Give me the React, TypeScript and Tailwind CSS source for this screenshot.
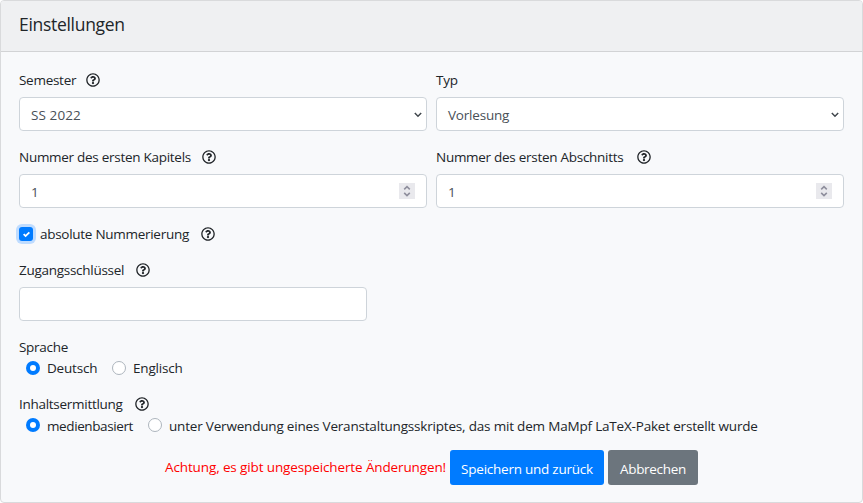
import type { ReactNode } from 'react';
import { FaRegQuestionCircle } from 'react-icons/fa';

function Help({ className = '' }: { className?: string }) {
  return <FaRegQuestionCircle className={`size-[14px] shrink-0 text-[#212529] ${className}`} />;
}

function Label({ children, width, help = false }: { children: ReactNode; width: string; help?: boolean }) {
  return (
    <div className="flex h-5 items-center tracking-[-0.28px]">
      <span className={`shrink-0 ${width}`}>{children}</span>
      {help && <Help />}
    </div>
  );
}

function Field({ children }: { children: ReactNode }) {
  return (
    <div className="mt-[7px] flex h-[34px] items-center justify-between rounded-[4px] border border-[#ced4da] bg-white pl-[11px] text-[#495057]">
      {children}
    </div>
  );
}

function Chevron() {
  return (
    <svg viewBox="0 0 8 6" className="mr-1 mt-px h-[6px] w-2 fill-none stroke-[#41474d] stroke-[1.5]">
      <path d="M0.8 1 4 4.2 7.2 1" />
    </svg>
  );
}

function Spinner() {
  return (
    <span className="mr-[11px] flex h-4 w-4 items-center justify-center bg-[#e9e9ed]">
      <svg viewBox="0 0 16 16" className="size-4 fill-none stroke-[#8f8f9d] stroke-[1.6]">
        <path d="M5.2 6.3 8 3.6l2.8 2.7M5.2 9.9 8 12.6l2.8-2.7" />
      </svg>
    </span>
  );
}

function Radio({ checked = false }: { checked?: boolean }) {
  return checked ? (
    <span className="flex size-[14px] shrink-0 items-center justify-center rounded-full bg-[#007bff]">
      <span className="size-[6px] rounded-full bg-white" />
    </span>
  ) : (
    <span className="size-[14px] shrink-0 rounded-full border border-[#adb5bd] bg-white" />
  );
}

export default function App() {
  return (
    <div className="h-[503px] w-[863px] overflow-hidden whitespace-nowrap rounded-[4px] border border-[#d9dadc] bg-[#f8f9fb] font-['Open_Sans',sans-serif] text-[13.5px] leading-5 tracking-[-0.2px] text-[#212529]">
      <header className="flex h-[51px] items-center border-b border-[#d2d3d5] bg-[#eff0f2] pb-[5px] pl-[18px] text-[17.5px] tracking-[-0.3px]">
        <span>Einstellungen</span>
      </header>
      <main className="px-[18px] pt-[18px]">
        <div className="grid grid-cols-2 gap-x-[9px] gap-y-4">
          <div>
            <Label width="w-[67px]" help>Semester</Label>
            <Field><span className="pt-[2px] tracking-[0.1px]">SS 2022</span><Chevron /></Field>
          </div>
          <div>
            <Label width="w-[67px]">Typ</Label>
            <Field><span className="pt-[2px]">Vorlesung</span><Chevron /></Field>
          </div>
          <div>
            <Label width="w-[183px]" help>Nummer des ersten Kapitels</Label>
            <Field><span className="pt-[2px]">1</span><Spinner /></Field>
          </div>
          <div>
            <Label width="w-[201px]" help>Nummer des ersten Abschnitts</Label>
            <Field><span className="pt-[2px]">1</span><Spinner /></Field>
          </div>
        </div>
        <div className="mt-4 flex h-5 items-center">
          <span className="flex size-[14px] shrink-0 items-center justify-center rounded-[3px] bg-[#007bff] ring-[3px] ring-[#bfdcff]">
            <svg viewBox="0 0 8 8" className="size-[7px] fill-white">
              <path d="M6.564.75l-3.59 3.612-1.538-1.55L0 4.26 2.974 7.25 8 2.193z" />
            </svg>
          </span>
          <span className="ml-[7px] w-[161px] shrink-0 tracking-[-0.28px]">absolute Nummerierung</span>
          <Help />
        </div>
        <div className="mt-4 w-[348px]">
          <Label width="w-[117px]" help>Zugangsschlüssel</Label>
          <Field>{null}</Field>
        </div>
        <div className="mt-4">
          <Label width="w-[67px]">Sprache</Label>
          <div className="mt-px flex h-5 items-center pl-[7px]">
            <Radio checked />
            <span className="ml-[7px] w-[65px] shrink-0">Deutsch</span>
            <Radio />
            <span className="ml-[7px]">Englisch</span>
          </div>
        </div>
        <div className="mt-4">
          <Label width="w-[116px]" help>Inhaltsermittlung</Label>
          <div className="mt-px flex h-5 items-center pl-[7px]">
            <Radio checked />
            <span className="ml-[7px] w-[101px] shrink-0 pt-[2px] tracking-[-0.4px]">medienbasiert</span>
            <Radio />
            <span className="ml-[7px] pt-[2px] tracking-[-0.19px]">unter Verwendung eines Veranstaltungsskriptes, das mit dem MaMpf LaTeX-Paket erstellt wurde</span>
          </div>
        </div>
        <div className="mt-[15px] flex h-[35px] items-center pl-[146px]">
          <span className="w-[285px] shrink-0 pb-[2px] tracking-[-0.12px] text-[#ff0000]">Achtung, es gibt ungespeicherte Änderungen!</span>
          <button className="h-[35px] w-[154px] rounded-[3px] bg-[#007bff] pt-[2px] tracking-[-0.24px] text-white">Speichern und zurück</button>
          <button className="ml-1 h-[35px] w-[90px] rounded-[3px] bg-[#6c757d] pt-[2px] tracking-[-0.3px] text-white">Abbrechen</button>
        </div>
      </main>
    </div>
  );
}
